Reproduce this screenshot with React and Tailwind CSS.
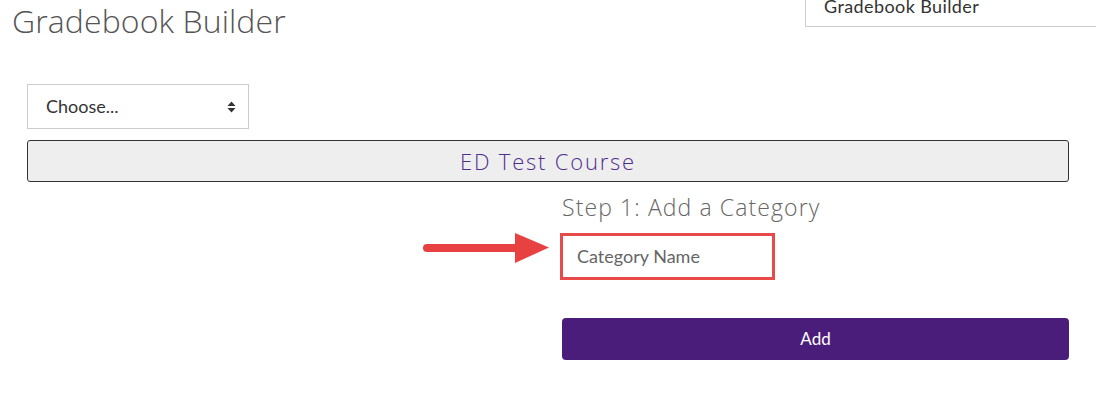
export default function App() {
  return (
    <div className="w-[1096px] h-[405px] overflow-hidden bg-white font-['Lato','Liberation_Sans',sans-serif] text-[#333]">
      {/* header */}
      <div className="flex justify-between h-[44px]">
        <h1 className="pl-[12px] mt-[1px] text-[32px] leading-[40px] font-light text-[#555] font-['Open_Sans','Liberation_Sans',sans-serif] tracking-[0.1px]">
          Gradebook Builder
        </h1>
        <div className="w-[291px] h-[27px] border border-t-0 border-r-0 border-[#ccc] pl-[18px]">
          <div className="-mt-[6px] text-[18px] leading-[24px] tracking-[0.4px] text-[#333]">Gradebook Builder</div>
        </div>
      </div>

      <div className="px-[27px]">
        {/* select */}
        <div className="mt-[40px] w-[222px] h-[45px] border border-[#ccc] flex items-center justify-between pl-[18px] pr-[12px]">
          <span className="text-[18px] text-[#333]">Choose...</span>
          <svg width="9" height="12" viewBox="0 0 9 12">
            <path d="M4.5 0.5 L8.5 5 L0.5 5 Z" fill="#333" />
            <path d="M4.5 11.5 L8.5 7 L0.5 7 Z" fill="#333" />
          </svg>
        </div>

        {/* course bar */}
        <div className="mt-[11px] h-[42px] bg-[#eeeeee] border border-[#333] rounded-[3px] flex items-center justify-center">
          <span className="text-[22px] font-light tracking-[1.8px] text-[#4f2d8f] font-['Open_Sans','Liberation_Sans',sans-serif]">
            ED Test Course
          </span>
        </div>

        <div className="grid grid-cols-2">
          <div />
          <div className="pl-[14px]">
            <h2 className="mt-[11px] text-[23px] leading-[29px] font-light tracking-[1.1px] text-[#666] font-['Open_Sans','Liberation_Sans',sans-serif]">
              Step 1: Add a Category
            </h2>
          </div>
        </div>

        <div className="grid grid-cols-2 mt-[11px]">
          <div className="flex justify-end items-start">
            <svg width="130" height="32" viewBox="0 0 130 32" className="mr-[-4px] -mt-[1px]">
              <line x1="5" y1="16" x2="96" y2="16" stroke="#e84141" strokeWidth="8" strokeLinecap="round" />
              <path d="M93 1 L127 15.5 L93 31 Z" fill="#e84141" />
            </svg>
          </div>
          <div className="pl-[12px]">
            <div className="w-[215px] h-[47px] border-[3px] border-[#e84a4a] flex items-center pl-[14px]">
              <span className="text-[18px] text-[#666]">Category Name</span>
            </div>
          </div>
        </div>

        <div className="grid grid-cols-2 mt-[38px]">
          <div />
          <div className="pl-[14px]">
            <button className="w-[507px] h-[42px] bg-[#4a1d7b] rounded-[4px] text-white text-[17px]">
              Add
            </button>
          </div>
        </div>
      </div>
    </div>
  );
}
